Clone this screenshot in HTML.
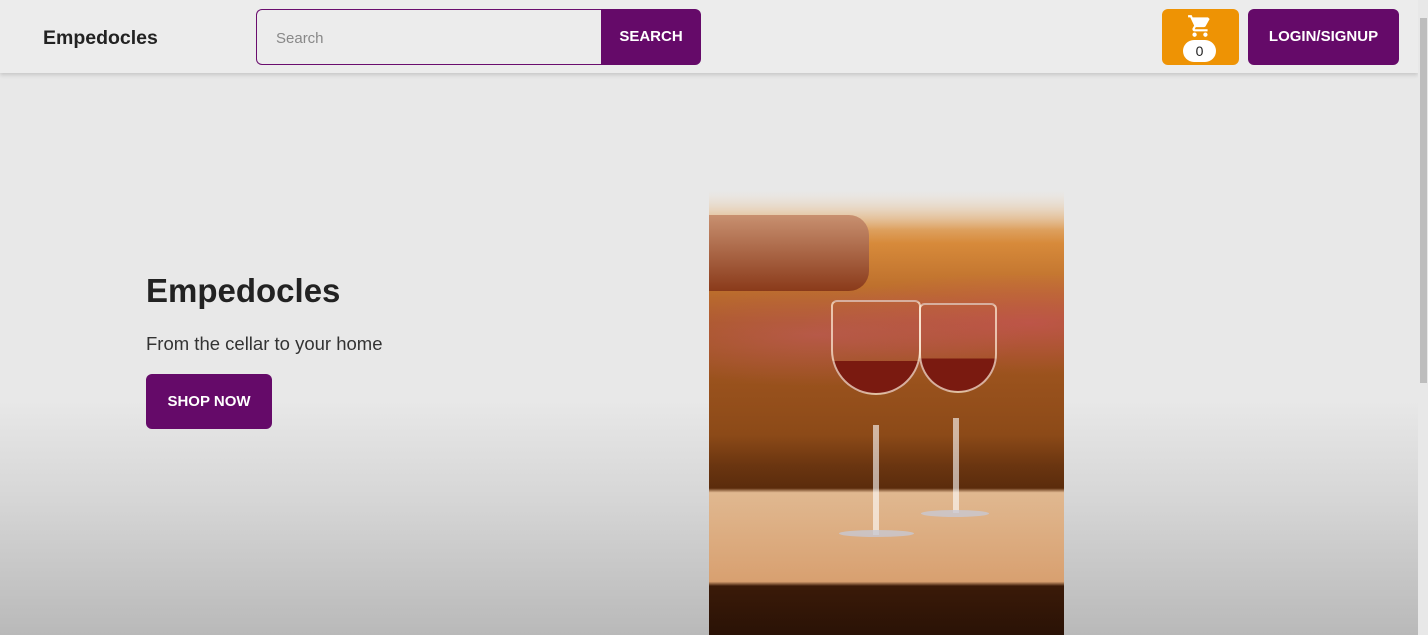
<!DOCTYPE html>
<html><head><style>
*{margin:0;padding:0;box-sizing:border-box}
body{width:1428px;height:635px;overflow:hidden;font-family:"Liberation Sans",sans-serif;background:linear-gradient(#e8e8e8 0,#e8e8e8 400px,#d6d6d6 500px,#b9b9b9 635px);position:relative}
.nav{position:absolute;left:0;top:0;width:1418px;height:73px;background:#ececec;box-shadow:0 2px 4px rgba(0,0,0,.15)}
.logo{position:absolute;left:43px;top:27px;font-size:19.5px;font-weight:bold;color:#222}
.search{position:absolute;left:256px;top:9px;width:345px;height:56px;border:1px solid #6a0d6e;border-right:none;border-radius:6px 0 0 6px;background:#ececec;font-size:15px;color:#888;padding:20px 0 0 19px}
.sbtn{position:absolute;left:601px;top:9px;width:100px;height:56px;background:#650a69;border-radius:0 6px 6px 0;color:#fff;font-weight:bold;font-size:15px;text-align:center;line-height:56px}
.cart{position:absolute;left:1162px;top:9px;width:77px;height:56px;background:#ee9304;border-radius:6px}
.badge{position:absolute;left:21px;top:31px;width:33px;height:22px;background:#fff;border-radius:11px;text-align:center;font-size:14px;line-height:22px;color:#222}
.login{position:absolute;left:1248px;top:9px;width:151px;height:56px;background:#650a69;border-radius:6px;color:#fff;font-weight:bold;font-size:15px;text-align:center;line-height:56px}
.sb{position:absolute;left:1418px;top:0;width:10px;height:635px;background:#e8e8e8}
.thumb{position:absolute;left:1420px;top:18px;width:7px;height:365px;background:#bdbdbd}
h1{position:absolute;left:146px;top:272px;font-size:33px;color:#222}
.sub{position:absolute;left:146px;top:333px;font-size:18.5px;color:#333}
.shop{position:absolute;left:146px;top:374px;width:126px;height:55px;background:#650a69;border-radius:6px;color:#fff;font-weight:bold;font-size:15px;text-align:center;line-height:55px}
.img{position:absolute;left:709px;top:190px;width:355px;height:445px;overflow:hidden;background:linear-gradient(#f0e0c8 0,#d78a3a 12%,#a85a22 30%,#8c4a18 55%,#6a3510 62%,#5b2c0c 67%,#e0b890 68%,#d8a070 88%,#3a1a08 89%,#2a1206 100%)}
</style></head><body>
<div class="nav">
<div class="logo">Empedocles</div>
<div class="search">Search</div>
<div class="sbtn">SEARCH</div>
<div class="cart"><svg style="position:absolute;left:25px;top:4px" width="26" height="26" viewBox="0 0 24 24"><path fill="#fff" d="M7 18c-1.1 0-2 .9-2 2s.9 2 2 2 2-.9 2-2-.9-2-2-2zM1 2v2h2l3.6 7.6-1.4 2.4c-.1.3-.2.6-.2 1 0 1.1.9 2 2 2h12v-2H7.4c-.1 0-.2-.1-.2-.2l.9-1.8h7.5c.8 0 1.4-.4 1.7-1l3.6-6.5L19.4 4H5.2l-.9-2H1zm16 16c-1.1 0-2 .9-2 2s.9 2 2 2 2-.9 2-2-.9-2-2-2z"/></svg><div class="badge">0</div></div>
<div class="login">LOGIN/SIGNUP</div>
</div>
<div class="sb"></div><div class="thumb"></div>
<h1>Empedocles</h1>
<div class="sub">From the cellar to your home</div>
<div class="shop">SHOP NOW</div>
<div class="img">
<div style="position:absolute;left:0;top:0;width:355px;height:40px;background:linear-gradient(#e8e8e8,rgba(232,232,232,0))"></div>
<div style="position:absolute;left:0;top:85px;width:355px;height:120px;background:radial-gradient(ellipse at 30% 50%,rgba(200,90,110,.5),transparent 60%),radial-gradient(ellipse at 90% 40%,rgba(210,80,110,.5),transparent 50%)"></div>
<div style="position:absolute;left:0;top:25px;width:160px;height:76px;background:linear-gradient(#c89070,#8a3a1a);border-radius:0 20px 20px 0"></div>
<div style="position:absolute;left:122px;top:110px;width:90px;height:95px;border:2px solid rgba(255,240,220,.7);border-radius:6px 6px 45px 45px;background:linear-gradient(transparent 65%,#7a1a10 65%)"></div>
<div style="position:absolute;left:210px;top:113px;width:78px;height:90px;border:2px solid rgba(255,240,220,.7);border-radius:6px 6px 40px 40px;background:linear-gradient(transparent 62%,#7a1a10 62%)"></div>
<div style="position:absolute;left:164px;top:235px;width:6px;height:110px;background:rgba(255,255,255,.6)"></div>
<div style="position:absolute;left:244px;top:228px;width:6px;height:95px;background:rgba(255,255,255,.6)"></div>
<div style="position:absolute;left:130px;top:340px;width:75px;height:7px;border-radius:50%;background:rgba(200,200,210,.8)"></div>
<div style="position:absolute;left:212px;top:320px;width:68px;height:7px;border-radius:50%;background:rgba(200,200,210,.8)"></div>
</div>
</body></html>
